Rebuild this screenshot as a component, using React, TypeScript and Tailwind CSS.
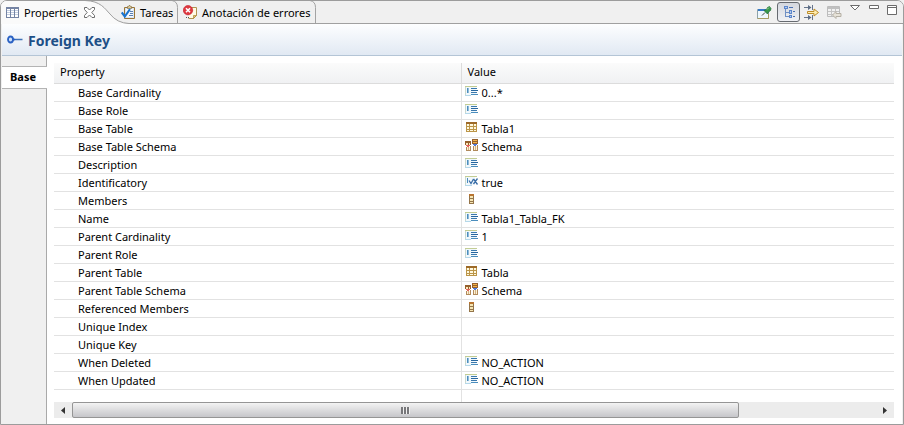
import React from "react";

type IconKind = "text" | "table" | "schema" | "flag" | "column" | "none";

const rows: { name: string; icon: IconKind; value: string }[] = [
  { name: "Base Cardinality", icon: "text", value: "0...*" },
  { name: "Base Role", icon: "text", value: "" },
  { name: "Base Table", icon: "table", value: "Tabla1" },
  { name: "Base Table Schema", icon: "schema", value: "Schema" },
  { name: "Description", icon: "text", value: "" },
  { name: "Identificatory", icon: "flag", value: "true" },
  { name: "Members", icon: "column", value: "" },
  { name: "Name", icon: "text", value: "Tabla1_Tabla_FK" },
  { name: "Parent Cardinality", icon: "text", value: "1" },
  { name: "Parent Role", icon: "text", value: "" },
  { name: "Parent Table", icon: "table", value: "Tabla" },
  { name: "Parent Table Schema", icon: "schema", value: "Schema" },
  { name: "Referenced Members", icon: "column", value: "" },
  { name: "Unique Index", icon: "none", value: "" },
  { name: "Unique Key", icon: "none", value: "" },
  { name: "When Deleted", icon: "text", value: "NO_ACTION" },
  { name: "When Updated", icon: "text", value: "NO_ACTION" },
];

function ValueIcon({ kind }: { kind: IconKind }) {
  return (
    <svg width="14" height="14" viewBox="0 0 14 14" className="shrink-0" aria-hidden="true" shapeRendering="crispEdges">
      {kind === "text" && (
        <>
          <path d="M1 2h10v8H1z" fill="#f1f8fc" />
          <path d="M0 1h12v1H0z" fill="#c3cd94" />
          <path d="M0 2h1v8H0z" fill="#c9d9cf" />
          <path d="M0 10h6v1H0z" fill="#b4d8ea" />
          <path d="M2 3h2v5H2z" fill="#8fbbd9" />
          <path d="M2 3h1v5H2z" fill="#4c8dbd" />
          <path d="M6 3h6v1H6zM6 7h6v1H6z" fill="#3a78ac" />
          <path d="M6 5h7v1H6z" fill="#27669f" />
          <path d="M6 9h7v1H6z" fill="#4a8dbd" />
        </>
      )}
      {kind === "table" && (
        <>
          <path d="M1 1h11v10H1z" fill="#bb9548" />
          <path d="M1 1h11v2H1z" fill="#9d6a28" />
          <path d="M2 3h2v2H2zM5 3h3v2H5zM9 3h2v2H9zM2 6h2v2H2zM5 6h3v2H5zM9 6h2v2H9zM2 9h2v1H2zM5 9h3v1H5zM9 9h2v1H9z" fill="#fff8df" />
        </>
      )}
      {kind === "schema" && (
        <>
          <path d="M0 2h6v4H0zM7 0h6v5H7z" fill="#95602c" />
          <path d="M8 1h4v1H8zM8 3h4v1H8z" fill="#f3b248" />
          <path d="M1 4h2v2H1zM4 4h1v2H4z" fill="#fbe9bd" />
          <path d="M1 6h4v1H4v1H2V7H1z" fill="#e5625b" />
          <path d="M8 5h4v1h-1v1H9V6H8z" fill="#4e79d8" />
          <path d="M1 8h1v3h4v1H1zM5 7h1v4H5zM8 7h1v4H8zM12 6h1v5h-1zM8 11h5v1H8z" fill="#b18a5c" />
          <path d="M2 8h3v3H2zM9 7h3v4H9z" fill="#fdf1d4" />
          <path d="M3 8h1v3H3zM10 7h1v4h-1z" fill="#d4b384" />
        </>
      )}
      {kind === "flag" && (
        <>
          <path d="M1 2h9v8H1z" fill="#f1f8fc" />
          <path d="M0 1h12v1H0z" fill="#c3cd94" />
          <path d="M0 2h1v8H0z" fill="#c9d9cf" />
          <path d="M0 10h7v1H0z" fill="#b4d8ea" />
          <path d="M2 3h1v5H2z" fill="#4c8dbd" />
          <path d="M4 5.500l2 3L8.500 4M8.500 4l4 5.500M12.500 3.500L8.500 9" fill="none" stroke="#3c6fa8" strokeWidth="1.300" shapeRendering="auto" />
        </>
      )}
      {kind === "column" && (
        <>
          <path d="M4 1h5v10H4z" fill="#94754a" />
          <path d="M4 1h5v2H4z" fill="#b87430" />
          <path d="M5 3h3v2H5zM5 6h3v2H5zM5 9h3v1H5z" fill="#f6e6b4" />
        </>
      )}
    </svg>
  );
}

function PropertiesIcon() {
  return (
    <svg width="13" height="12" viewBox="0 0 13 12" aria-hidden="true" shapeRendering="crispEdges">
      <path d="M0 0h13v11H0z" fill="#7584a4" />
      <path d="M1 2h3v8H1zM5 2h3v8H5zM9 2h3v8H9z" fill="#fff" />
      <path d="M1 3h3v1H1zM5 3h3v1H5zM9 3h3v1H9zM1 5h3v1H1zM5 5h3v1H5zM9 5h3v1H9zM1 7h3v1H1zM5 7h3v1H5zM9 7h3v1H9z" fill="#c2cde0" />
    </svg>
  );
}

function TasksIcon() {
  return (
    <svg width="15" height="15" viewBox="0 0 15 15" aria-hidden="true">
      <path d="M3.500 2.500h10v11h-10z" fill="#d8e5f3" stroke="#9a7436" />
      <path d="M5 4h7v8H5z" fill="#f4f8fd" />
      <path d="M6.500 3.500V1.500h1l.5-1h1l.5 1h1v2z" fill="#d9c79a" stroke="#8a7343" strokeWidth=".7" />
      <path d="M9 6.500h3M9 8.500h3M8 10.500h4" stroke="#5a7fb2" />
      <path d="M.800 7.500l3 4L9 4.200" fill="none" stroke="#1974cf" strokeWidth="2.100" />
    </svg>
  );
}

function ErrorIcon() {
  return (
    <svg width="15" height="15" viewBox="0 0 15 15" aria-hidden="true">
      <path d="M6.500 2.500h7v8l-3 3h-5" fill="#fffbe5" stroke="#b19450" />
      <path d="M13.500 10.500h-3v3z" fill="#e4c36d" stroke="#a98538" strokeWidth=".7" />
      <path d="M3 12.500h1M5 12.500h1" stroke="#555" />
      <circle cx="5" cy="5.200" r="4.700" fill="#df3a40" stroke="#c51f2c" strokeWidth=".6" />
      <path d="M3 3.200l4 4M7 3.200l-4 4" stroke="#fff" strokeWidth="1.600" />
    </svg>
  );
}

function TreeIcon() {
  return (
    <svg width="14" height="14" viewBox="0 0 14 14" aria-hidden="true" shapeRendering="crispEdges">
      <path d="M3 4h1v8H3zM4 7h3v1H4zM4 11h3v1H4z" fill="#6f8fc4" />
      <path d="M2 1h4v3H2zM7 5h3v4H7zM7 10h3v3H7z" fill="#5c86cc" />
      <path d="M3 2h2v1H3zM8 6h1v2H8zM8 11h1v1H8z" fill="#b4ccf0" />
      <path d="M7 2h4v1H7zM11 6h2v1h-2zM11 11h2v1h-2z" fill="#4a70b2" />
    </svg>
  );
}

function PinIcon() {
  return (
    <svg width="15" height="14" viewBox="0 0 15 14" aria-hidden="true">
      <path d="M.5 3.500h11v9H.5z" fill="#eef7fd" stroke="#8da2a9" />
      <path d="M1 3h8v2H1z" fill="#3679c5" />
      <path d="M11.500 8v4.500H.5" fill="none" stroke="#a79b61" />
      <path d="M5 9.500l3-3" stroke="#444" />
      <path d="M7 4.500l3.500 3.500 1-2 2-1.500.5-2L12.500.5l-2 1-1 2z" fill="#38994a" stroke="#1f6e35" strokeWidth=".7" />
      <path d="M10 3.500l2-2" stroke="#9ddb9c" />
    </svg>
  );
}

function FilterIcon() {
  return (
    <svg width="16" height="16" viewBox="0 0 16 16" aria-hidden="true">
      <path d="M0 3.500h5M0 13.500h5M8.500 1v5M8.500 11v5" stroke="#66758c" />
      <path d="M4 1l3.500 2.500L4 6zM4 11l3.500 2.500L4 16z" fill="#5c6c84" />
      <path d="M3.500 7.500H10V5l4.500 3.500L10 12V9.500H3.500z" fill="#ffeeb0" stroke="#bd8c28" />
    </svg>
  );
}

function RestoreIcon() {
  return (
    <svg width="15" height="13" viewBox="0 0 15 13" aria-hidden="true">
      <path d="M.5.5h12v10H.5z" fill="#f2f2f2" stroke="#bcbcbc" />
      <path d="M1 1h11v2H1z" fill="#c0c0c0" />
      <path d="M1 5.500h11M1 8.500h11M4.500 3v7M8.500 3v7" stroke="#c4c4c4" />
      <path d="M5.500 9l3.500-3.500v2h5v3H9v2z" fill="#e6e2d8" stroke="#b4afa4" />
    </svg>
  );
}

function TabEdge() {
  return (
    <svg width="6" height="24" viewBox="0 0 6 24" className="shrink-0" aria-hidden="true">
      <path d="M0 .5q5.500 1 5.500 7V23" fill="none" stroke="#a3a3a3" />
    </svg>
  );
}

function TabBar() {
  return (
    <header className="flex h-6 justify-between border-b border-[#a0a0a0] bg-[#f0f0f0]">
      <div className="flex" role="tablist" aria-label="Views">
        <div className="relative flex w-[120px] items-start">
          <svg width="128" height="24" viewBox="0 0 128 24" className="absolute top-0 left-0" aria-hidden="true">
            <path d="M0 24V0H84C100 1 104 9 109 14Q116 23.500 128 23.500V24z" fill="#fafafa" />
            <path d="M84 .5C100 1 104 9 109 14Q116 23 128 23.500" fill="none" stroke="#a0a0a0" />
          </svg>
          <button role="tab" aria-selected="true" className="relative flex h-6 items-center gap-[5px] pt-px pl-[5px]">
            <PropertiesIcon />
            <span className="w-[54px] text-left">Properties</span>
          </button>
          <button aria-label="Close Properties" className="relative mt-[7px] ml-[6px]">
            <svg width="11" height="11" viewBox="0 0 11 11" aria-hidden="true">
              <path d="M.5.5h2.500l2.500 2.500L8 .5h2.500v2L7.800 5.500l2.700 3v2H8L5.500 8 3 10.500H.5v-2l2.700-3-2.700-3z" fill="#fff" stroke="#6d6d6d" />
            </svg>
          </button>
        </div>
        <button role="tab" aria-selected="false" className="flex h-6 items-center">
          <TasksIcon />
          <span className="w-9 pt-px pl-1 text-left whitespace-nowrap">Tareas</span>
          <TabEdge />
        </button>
        <button role="tab" aria-selected="false" className="flex h-6 items-center pl-[5px]">
          <ErrorIcon />
          <span className="w-[112px] pt-px pl-1 text-left whitespace-nowrap">Anotación de errores</span>
          <TabEdge />
        </button>
      </div>
      <div className="flex items-start pr-[6px]" role="toolbar" aria-label="View toolbar">
        <button aria-label="Pin" className="mt-[6px] mr-[5px]"><PinIcon /></button>
        <button aria-label="Show categories" aria-pressed="true" className="mt-[2px] mr-1 flex h-5 w-[23px] items-center justify-center rounded-[3px] border border-[#666a70] bg-linear-to-b from-[#d4d7de] to-[#f0f1f5]">
          <TreeIcon />
        </button>
        <button aria-label="Show advanced properties" className="mt-1 mr-[7px]"><FilterIcon /></button>
        <button aria-label="Restore default value" disabled className="mt-[6px] mr-2"><RestoreIcon /></button>
        <button aria-label="View menu" className="mt-[5px] mr-[9px]">
          <svg width="10" height="6" viewBox="0 0 10 6" aria-hidden="true"><path d="M.5.5h9L5 5z" fill="#fff" stroke="#6b6b6b" /></svg>
        </button>
        <button aria-label="Minimize" className="mt-[5px] mr-2">
          <svg width="10" height="4" viewBox="0 0 10 4" aria-hidden="true"><path d="M.5.5h9v3h-9z" fill="#fff" stroke="#6b6b6b" /></svg>
        </button>
        <button aria-label="Maximize" className="mt-[5px]">
          <svg width="10" height="10" viewBox="0 0 10 10" aria-hidden="true"><path d="M.5.5h9v9h-9zM0 2.500h10" fill="#fff" stroke="#6b6b6b" /></svg>
        </button>
      </div>
    </header>
  );
}

function ScrollBar() {
  return (
    <div className="flex h-4 bg-[#ececec]">
      <button aria-label="Scroll left" className="flex w-[18px] shrink-0 items-center justify-center">
        <svg width="4" height="7" viewBox="0 0 4 7" aria-hidden="true"><path d="M4 0v7L0 3.500z" fill="#333" /></svg>
      </button>
      <div className="flex min-w-0 flex-1">
        <div className="flex w-[83%] items-center justify-center rounded-[2px] border border-[#959595] bg-linear-to-b from-[#f3f3f3] via-[#dcdcde] to-[#c6c6ca]">
          <svg width="9" height="7" viewBox="0 0 9 7" aria-hidden="true" shapeRendering="crispEdges">
            <path d="M0 0h2v7H0zM3 0h2v7H3zM6 0h2v7H6z" fill="#77777a" />
            <path d="M2 0h1v7H2zM5 0h1v7H5zM8 0h1v7H8z" fill="#f0f0f0" />
          </svg>
        </div>
      </div>
      <button aria-label="Scroll right" className="flex w-[18px] shrink-0 items-center justify-center">
        <svg width="4" height="7" viewBox="0 0 4 7" aria-hidden="true"><path d="M0 0v7l4-3.500z" fill="#333" /></svg>
      </button>
    </div>
  );
}

export default function App() {
  return (
    <div className="bg-[#f0f0f0] font-['Noto_Sans','Open_Sans',sans-serif] text-[11px] leading-4 text-black">
      <main className="overflow-hidden rounded-t-[7px] border border-[#9c9c9c] bg-white">
        <div className="-mt-px">
          <TabBar />
        </div>
        <div className="border-x border-[#f0f0f0]">
          <div className="flex h-8 items-center gap-1 border-b border-[#b4c5d6] bg-linear-to-b from-[#fdfeff] to-[#e1e9f3] pl-[5px]">
            <svg width="17" height="9" viewBox="0 0 17 9" aria-hidden="true">
              <ellipse cx="3.500" cy="4.500" rx="2.500" ry="3" fill="#cfe2fa" stroke="#2b62c4" strokeWidth="1.800" />
              <path d="M6 4.500h9.500" stroke="#3f72b8" strokeWidth="1.600" />
              <path d="M6 3v3l3-1.500z" fill="#2b62c4" />
            </svg>
            <h1 className="pt-[2px] text-[14px] leading-5 font-bold text-[#1d4f87]">Foreign Key</h1>
          </div>
          <div className="flex">
            <nav className="flex w-[45px] shrink-0 flex-col bg-[#f0f0f0]" role="tablist" aria-label="Sections">
              <div className="h-[10px] border-r border-[#a9a9a9]" />
              <button role="tab" aria-selected="true" className="h-[23px] border-y border-[#b4b4b4] bg-white pb-[2px] pl-2 text-left font-bold">Base</button>
              <div className="flex-1 border-r border-[#a9a9a9]" />
            </nav>
            <div className="min-w-0 flex-1 pt-[7px] pr-2 pb-[6px] pl-[7px]">
              <table className="w-full table-fixed border-collapse">
                <colgroup>
                  <col className="w-[407px]" />
                  <col />
                </colgroup>
                <thead>
                  <tr className="h-5 bg-linear-to-b from-[#fbfbfb] to-[#f0f1f3]">
                    <th scope="col" className="border-r border-b border-[#dcdcdc] p-0 pb-[2px] pl-[6px] text-left font-normal">Property</th>
                    <th scope="col" className="border-b border-[#dcdcdc] p-0 pb-[2px] pl-[6px] text-left font-normal">Value</th>
                  </tr>
                </thead>
                <tbody>
                  {rows.map((row) => (
                    <tr key={row.name} className="h-[18px] border-b border-[#e2e2e2]">
                      <td className="border-r border-[#e2e2e2] p-0 pt-px pl-6">{row.name}</td>
                      <td className="p-0 pt-px pl-[3px]">
                        <div className="flex h-4 items-start gap-[3px]">
                          <ValueIcon kind={row.icon} />
                          <span>{row.value}</span>
                        </div>
                      </td>
                    </tr>
                  ))}
                  <tr className="h-[13px]" aria-hidden="true">
                    <td className="border-r border-[#e2e2e2] p-0" />
                    <td className="p-0" />
                  </tr>
                </tbody>
              </table>
              <ScrollBar />
            </div>
          </div>
        </div>
      </main>
    </div>
  );
}
